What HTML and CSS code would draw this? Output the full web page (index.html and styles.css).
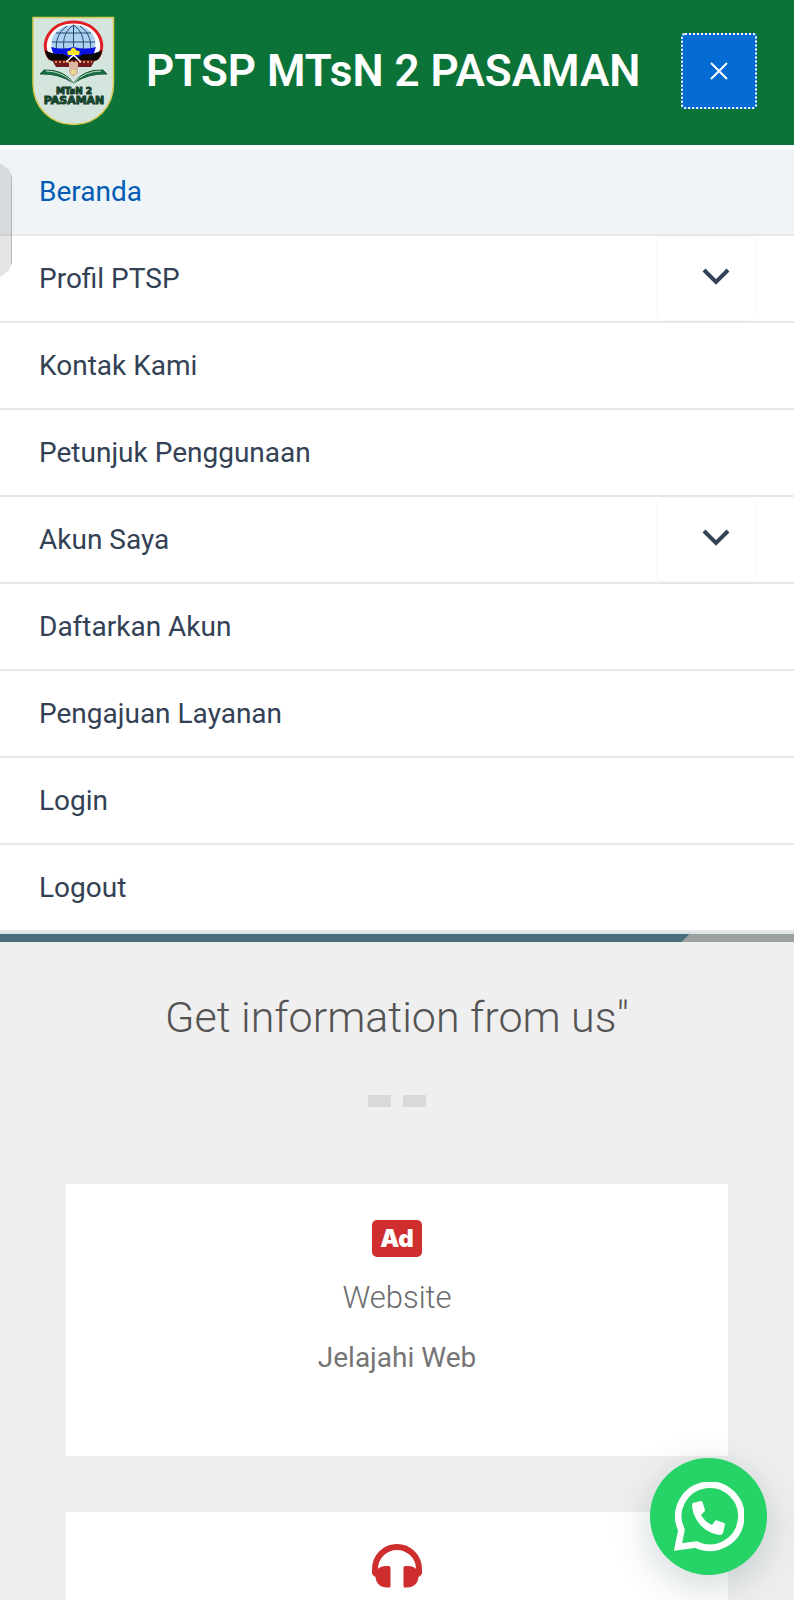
FILE: index.html
```html
<!DOCTYPE html>
<html lang="id">
<head>
  <meta charset="UTF-8" />
  <title>PTSP MTsN 2 PASAMAN</title>
  <meta name="viewport" content="width=device-width, initial-scale=1" />
  <link rel="stylesheet" href="styles.css">
</head>
<body>
  <header class="site-header">
    <a class="logo" href="#" aria-label="MTsN 2 Pasaman">
      <svg width="84" height="110" viewBox="32 17 84 110">
        <path d="M33 18.500H113.500V84C113.500 108 97 125.500 73.500 125.500S33 108 33 84Z" fill="#d3e5dc" stroke="#d9c84d" stroke-width="1.500"/>
        <!-- globe -->
        <path d="M50 60C38 45 50 23 73.500 23S109 45 97 60Z" fill="#fff"/>
        <path d="M50 60C38 45 50 23 73.500 23S109 45 97 60" fill="none" stroke="#e01e25" stroke-width="3"/>
        <ellipse cx="73.500" cy="44" rx="22" ry="18" fill="#acd2ef"/>
        <path d="M73.500 26V56M52 43H95M56 34H91M73.500 26C63 33 62 45 65 55M73.500 26C84 33 85 45 82 55M67 27C57 34 55 44 57 54M80 27C90 34 92 44 90 54" fill="none" stroke="#244873" stroke-width="1"/>
        <path d="M51 48Q62 51 73.500 48Q85 51 96 48L92 60H55Z" fill="#0b13e0"/>
        <!-- gonjong roof -->
        <path d="M45 51Q53 56 63 55L69 58H78L84 55Q94 56 102 51Q101 60 95 62H52Q46 60 45 51Z" fill="#080808"/>
        <path d="M52 61H95L91 68H56Z" fill="#6f171d"/>
        <path d="M55 63H92" stroke="#d58e50" stroke-width="2" stroke-dasharray="2 2"/>
        <path d="M68 56Q66 51 70 52Q73 45 77 52Q81 51 79 56Z" fill="#ffe622"/>
        <path d="M66 63L73.500 56L81 63" fill="none" stroke="#fff" stroke-width="1.500"/>
        <path d="M69 63H78V74L73.500 78L69 74Z" fill="#d8b7a4"/>
        <circle cx="73.500" cy="73" r="2.500" fill="#e7dc8a"/>
        <!-- open book -->
        <path d="M44 71Q63 70 73.500 84Q58 74 40 75ZM103 71Q84 70 73.500 84Q89 74 107 75Z" fill="#197047" stroke="#175437" stroke-width="1"/>
        <path d="M46 72Q62 72 73.500 84Q85 72 101 72" fill="none" stroke="#b7dcbd" stroke-width="1"/>
        <text x="74" y="95" class="logo-text">MTsN 2</text>
        <text x="74" y="105" class="logo-text logo-place">PASAMAN</text>
      </svg>
    </a>
    <h1 class="site-title">PTSP MTsN 2 PASAMAN</h1>
    <button class="menu-close" type="button" aria-label="Tutup menu">
      <svg width="20" height="20" viewBox="0 0 20 20"><path d="M2 2L18 18M18 2L2 18"/></svg>
    </button>
  </header>

  <nav class="menu">
    <ul>
      <li class="active"><a href="#">Beranda</a></li>
      <li>
        <a href="#">Profil PTSP</a>
        <button class="submenu-toggle" type="button" aria-label="Buka submenu Profil PTSP">
          <svg width="28" height="18" viewBox="0 0 28 18"><path d="M2 3L14 15L26 3"/></svg>
        </button>
      </li>
      <li><a href="#">Kontak Kami</a></li>
      <li><a href="#">Petunjuk Penggunaan</a></li>
      <li>
        <a href="#">Akun Saya</a>
        <button class="submenu-toggle" type="button" aria-label="Buka submenu Akun Saya">
          <svg width="28" height="18" viewBox="0 0 28 18"><path d="M2 3L14 15L26 3"/></svg>
        </button>
      </li>
      <li><a href="#">Daftarkan Akun</a></li>
      <li><a href="#">Pengajuan Layanan</a></li>
      <li><a href="#">Login</a></li>
      <li><a href="#">Logout</a></li>
    </ul>
  </nav>

  <main>
    <div class="banner-edge"></div>
    <section class="info">
      <h2>Get information from us"</h2>
      <div class="divider"><span></span><span></span></div>
      <div class="cards">
        <article class="card">
          <div class="card-icon"><span class="ad-icon">Ad</span></div>
          <h3>Website</h3>
          <a href="#">Jelajahi Web</a>
        </article>
        <article class="card">
          <div class="card-icon">
            <svg width="50" height="44" viewBox="0 0 50 44">
              <path d="M3 30V25A22 22 0 0 1 47 25V30" fill="none" stroke="#cf2e2e" stroke-width="6"/>
              <path d="M14 22H17Q18.500 22 18.500 24V42Q18.500 43.500 17 43.500H15C8 43.500 4 39 3.500 33C1 32 0 30 0 27L5 26Q8 22 14 22ZM36 22H33Q31.500 22 31.500 24V42Q31.500 43.500 33 43.500H35C42 43.500 46 39 46.500 33C49 32 50 30 50 27L45 26Q42 22 36 22Z" fill="#cf2e2e"/>
            </svg>
          </div>
        </article>
      </div>
    </section>
  </main>

  <div class="edge-handle"></div>

  <a class="whatsapp" href="#" aria-label="WhatsApp">
    <svg width="70" height="70" viewBox="0 0 70 70">
      <path d="M4 65L7.500 48A31.500 31.500 0 1 1 22 62.500Z" fill="none" stroke="#fff" stroke-width="6.500"/>
      <path d="M19 21L27 19Q28 19 28.500 20L31 28Q31 29 30 30L27 33Q31 40 38 43L41 39Q42 38 43 38.500L50 41Q51 41.500 51 42L49 51Q48 53 46 53C30 51 19 38 18 23Q18 21 19 21Z" fill="#fff"/>
    </svg>
  </a>
</body>
</html>
```
FILE: styles.css
```css
* {
  box-sizing: border-box;
}
body {
  margin: 0;
  height: 100vh;
  overflow: hidden;
  font-family: Roboto, sans-serif;
  font-size: 28px;
  background: #efefef;
}
a {
  color: inherit;
  text-decoration: none;
}
button {
  padding: 0;
  cursor: pointer;
}
.site-header {
  display: flex;
  align-items: center;
  height: 145px;
  padding: 0 37px 3px 32px;
  background: #0b7338;
}
.logo svg {
  display: block;
}
.logo-text {
  font-family: "DejaVu Sans", sans-serif;
  font-size: 9px;
  font-weight: bold;
  text-anchor: middle;
  fill: #16502c;
  stroke: #16402c;
  stroke-width: 1;
}
.logo-place {
  font-size: 11px;
}
.site-title {
  flex: 1;
  margin: 0 0 0 30px;
  font-size: 44px;
  line-height: 56px;
  font-weight: 600;
  color: #fff;
  white-space: nowrap;
}
.menu-close {
  display: flex;
  align-items: center;
  justify-content: center;
  width: 76px;
  height: 76px;
  border: 2px dotted #fff;
  border-radius: 4px;
  background: #046bd2;
}
.menu-close path {
  fill: none;
  stroke: #fff;
  stroke-width: 2;
}
.menu {
  padding-top: 4px;
  background: #fff;
}
.menu ul {
  margin: 0;
  padding: 0;
  list-style: none;
}
.menu li {
  display: flex;
  height: 87px;
  padding-right: 38px;
  border-bottom: 2px solid #e6e7e9;
  color: #334155;
}
.menu li > a {
  flex: 1;
  padding-left: 39px;
  line-height: 85px;
}
.menu .active {
  background: #eff4f9;
  color: #045cb4;
}
.submenu-toggle {
  display: flex;
  align-items: center;
  justify-content: center;
  width: 100px;
  padding: 0 0 6px 20px;
  border: 1px solid #f8f8f8;
  border-radius: 6px;
  background: #fff;
}
.submenu-toggle path {
  fill: none;
  stroke: #334155;
  stroke-width: 4;
}
.banner-edge {
  height: 10px;
  border-top: 2px solid #dce3e4;
  background: linear-gradient(135deg, #4b6e7c 86%, #9ba1a1 86%);
}
.info {
  padding: 45px 66px 0;
  text-align: center;
}
.info h2 {
  margin: 0;
  font-size: 43px;
  line-height: 60px;
  font-weight: 300;
  color: #545454;
}
.divider {
  display: flex;
  justify-content: center;
  gap: 12px;
  margin: 48px 0 77px;
}
.divider span {
  width: 23px;
  height: 12px;
  background: #d9d9d9;
}
.cards {
  display: grid;
  gap: 56px;
}
.card {
  min-height: 272px;
  padding: 32px 20px;
  background: #fff;
}
.card-icon {
  display: flex;
  align-items: center;
  justify-content: center;
  height: 44px;
}
.ad-icon {
  width: 50px;
  border-radius: 5px;
  background: #cf2e2e;
  font-family: Inter, sans-serif;
  font-size: 24px;
  line-height: 37px;
  font-weight: 900;
  color: #fff;
}
.card h3 {
  margin: 16px 0;
  font-size: 31px;
  line-height: 44px;
  font-weight: 300;
  color: #6b6b6b;
}
.card a {
  line-height: 44px;
  color: #757575;
}
/* side panel grip, half out of the window */
.edge-handle {
  position: fixed;
  top: 163px;
  left: 0;
  width: 12px;
  height: 114px;
  background: rgba(120, 120, 120, 0.2);
  border-right: 1px solid rgba(120, 120, 120, 0.4);
  clip-path: polygon(0 0, 75% 6%, 100% 12%, 100% 88%, 75% 94%, 0 100%);
}
.whatsapp {
  position: fixed;
  right: 27px;
  bottom: 25px;
  display: flex;
  align-items: center;
  justify-content: center;
  width: 117px;
  height: 117px;
  border-radius: 50%;
  background: #25d366;
  box-shadow: 0 10px 40px rgba(7, 50, 60, 0.2);
}
```
